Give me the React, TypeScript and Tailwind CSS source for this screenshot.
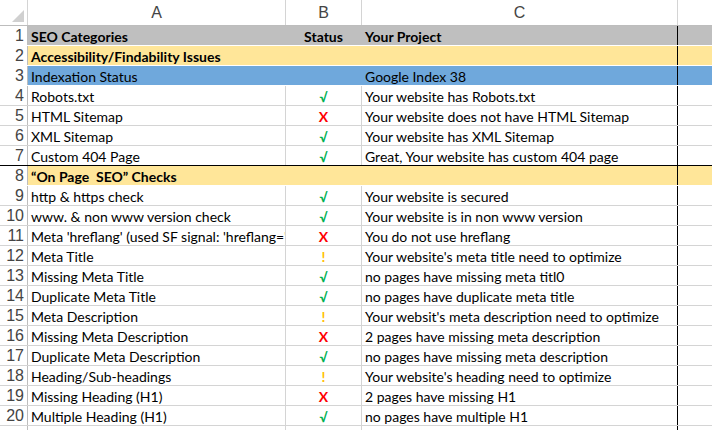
import React from "react";

type R = { a: string; s?: string; c?: string; kind?: "gray" | "yellow" | "blue"; bold?: boolean };
const rows: R[] = [
  { a: "SEO Categories", s: "Status", c: "Your Project", kind: "gray", bold: true },
  { a: "Accessibility/Findability Issues", kind: "yellow", bold: true },
  { a: "Indexation Status", c: "Google Index 38", kind: "blue" },
  { a: "Robots.txt", s: "v", c: "Your website has Robots.txt" },
  { a: "HTML Sitemap", s: "x", c: "Your website does not have HTML Sitemap" },
  { a: "XML Sitemap", s: "v", c: "Your website has XML Sitemap" },
  { a: "Custom 404 Page", s: "v", c: "Great, Your website has custom 404 page" },
  { a: "\u201COn Page\u00A0 SEO\u201D Checks", kind: "yellow", bold: true },
  { a: "http & https check", s: "v", c: "Your website is secured" },
  { a: "www. & non www version check", s: "v", c: "Your website is in non www version" },
  { a: "Meta 'hreflang' (used SF signal: 'hreflang='", s: "x", c: "You do not use hreflang" },
  { a: "Meta Title", s: "!", c: "Your website's meta title need to optimize" },
  { a: "Missing Meta Title", s: "v", c: "no pages have missing meta titl0" },
  { a: "Duplicate Meta Title", s: "v", c: "no pages have duplicate meta title" },
  { a: "Meta Description", s: "!", c: "Your websit's meta description need to optimize" },
  { a: "Missing Meta Description", s: "x", c: "2 pages have missing meta description" },
  { a: "Duplicate Meta Description", s: "v", c: "no pages have missing meta description" },
  { a: "Heading/Sub-headings", s: "!", c: "Your website's heading need to optimize" },
  { a: "Missing Heading (H1)", s: "x", c: "2 pages have missing H1" },
  { a: "Multiple Heading (H1)", s: "v", c: "no pages have multiple H1" },
];

function Status({ s, bold }: { s?: string; bold?: boolean }) {
  if (!s) return null;
  if (s === "v") return <span className="text-[#00b050] font-bold text-[13px]">√</span>;
  if (s === "x") return <span className="text-[#ff0000] font-bold">X</span>;
  if (s === "!") return <span className="text-[#ffc000] font-bold">!</span>;
  return <span className={bold ? "font-bold" : ""}>{s}</span>;
}

export default function App() {
  return (
    <div className="w-[712px] h-[430px] overflow-hidden bg-white text-[14px] text-black" style={{ fontFamily: "Lato, 'Open Sans', sans-serif" }}>
      <div className="flex h-[26px] border-b border-[#bdbdbd] text-[#444] text-[16px]" style={{ fontFamily: "'Liberation Sans', sans-serif" }}>
        <div className="w-[28px] shrink-0 relative border-r border-[#d4d4d4]">
          <div className="absolute right-[3px] bottom-[3px] w-0 h-0 border-l-[12px] border-l-transparent border-b-[12px] border-b-[#d0d0d0]" />
        </div>
        <div className="w-[258px] shrink-0 flex items-center justify-center border-r border-[#d4d4d4]">A</div>
        <div className="w-[76px] shrink-0 flex items-center justify-center border-r border-[#d4d4d4]">B</div>
        <div className="w-[316px] shrink-0 flex items-center justify-center border-r border-[#d4d4d4]">C</div>
        <div className="flex-1" />
      </div>
      {rows.map((r, i) => {
        const bg = r.kind === "gray" ? "bg-[#bfbfbf]" : r.kind === "yellow" ? "bg-[#ffe699]" : r.kind === "blue" ? "bg-[#6fa8dc]" : "bg-white";
        const bb = i === 6 ? "border-b border-black" : r.kind ? "border-b border-white" : "border-b border-[#d4d4d4]";
        const vb = r.kind ? "border-r border-transparent" : "border-r border-[#d4d4d4]";
        return (
          <div key={i} className={`flex h-[20px] leading-[21px] ${bb}`}>
            <div className="w-[28px] shrink-0 text-right pr-[3px] text-[#444] text-[16px] leading-[20px] border-r border-[#bdbdbd] bg-white" style={{ fontFamily: "'Liberation Sans', sans-serif" }}>{i + 1}</div>
            <div className={`w-[258px] shrink-0 pl-[3px] whitespace-nowrap overflow-hidden ${bg} ${vb} ${r.bold ? "font-bold" : ""}`}>{r.a}</div>
            <div className={`w-[76px] shrink-0 text-center ${bg} ${vb} ${r.bold ? "font-bold" : ""}`}><Status s={r.s} bold={r.bold} /></div>
            <div className={`w-[316px] shrink-0 pl-[3px] whitespace-nowrap overflow-hidden ${bg} border-r border-black ${r.bold ? "font-bold" : ""}`}>{r.c}</div>
            <div className={`flex-1 ${bg}`} />
          </div>
        );
      })}
      <div className="flex h-[6px]">
        <div className="w-[28px] border-r border-[#bdbdbd]" />
        <div className="w-[258px] border-r border-[#d4d4d4]" />
        <div className="w-[76px] border-r border-[#d4d4d4]" />
        <div className="w-[316px] border-r border-black" />
      </div>
    </div>
  );
}
